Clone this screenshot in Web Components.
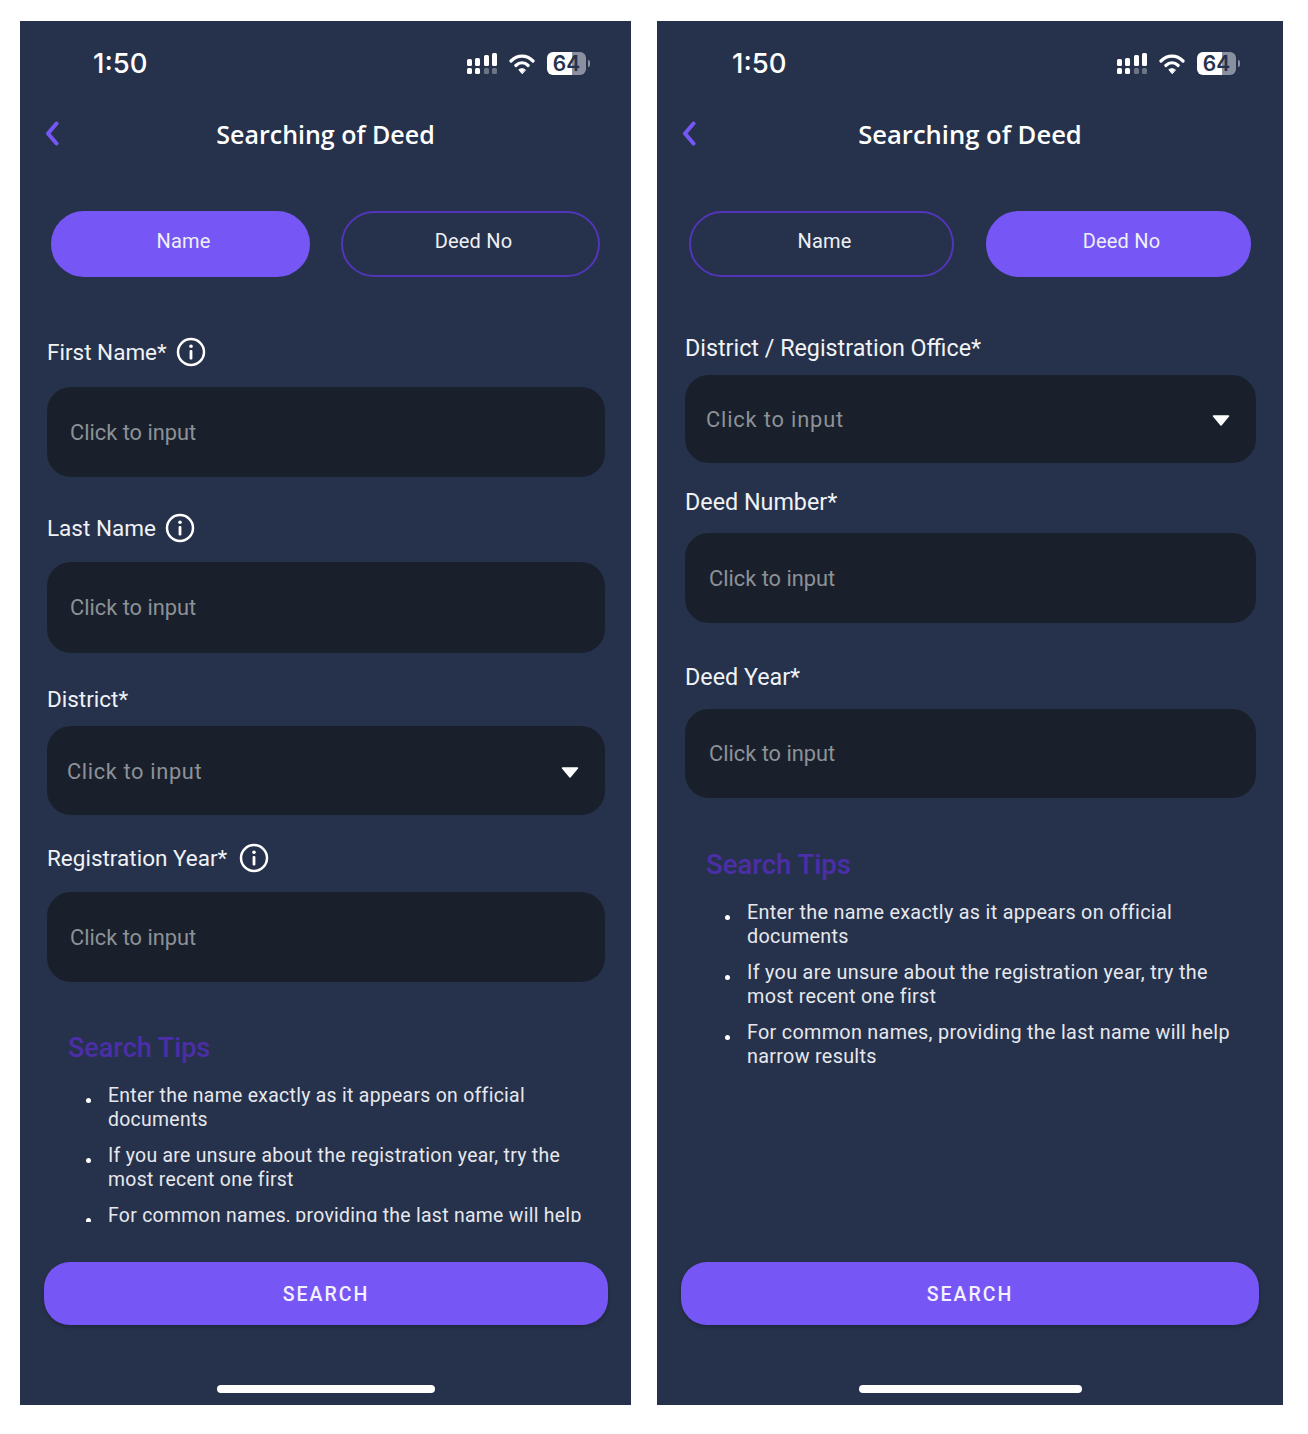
<!DOCTYPE html>
<html>
<head>
<meta charset="utf-8">
<title>Searching of Deed</title>
<style>
    html, body { margin: 0; background: #fff; }
    body {
        display: flex;
        gap: 26px;
        padding: 21px 0 0 20px;
        height: 1413px;
        box-sizing: border-box;
        font-family: Roboto, sans-serif;
    }
</style>
</head>
<body>

<deed-screen style="--w:611px; --pad:27px; --pad-r:26px; --tab-l:31px; --tab-r:31px; --tab-gap:31px; --btn-pad:24px; --btn-pad-r:23px; --bar:218px; --time-x:73px; --icons-r:41px; --back-x:25px; --title-size:25px; --top-gap:60px; --label-size:22.5px; --tip-size:19.4px; --h2-size:27px; --li-x:40px;">
    <form-field label="First Name*" info style="--info-gap:9px; margin-bottom:36px;"></form-field>
    <form-field label="Last Name" info style="--info-gap:9px; --label-gap:19px; --box-h:91px; margin-bottom:31px;"></form-field>
    <form-field label="District*" select style="--box-h:89px; --text-x:20px; --label-gap:12px; --ph-ls:.65px; margin-bottom:28px;"></form-field>
    <form-field label="Registration Year*" info style="--info-gap:12px; --label-gap:19px;"></form-field>
    <search-tips style="--tips-top:50px; --tips-x:21px;"></search-tips>
</deed-screen>

<deed-screen active="1" style="--w:626px; --pad:28px; --pad-r:27px; --tab-l:32px; --tab-r:32px; --tab-gap:32px; --btn-pad:24px; --btn-pad-r:24px; --bar:223px; --time-x:75px; --icons-r:43px; --back-x:25px; --title-size:25.6px; --top-gap:56px; --label-size:23.3px; --tip-size:19.8px; --h2-size:27.5px; --li-x:41px;">
    <form-field label="District / Registration Office*" select style="--box-h:88px; --text-x:21px; --label-gap:12px; --ph-ls:.85px; margin-bottom:24px;"></form-field>
    <form-field label="Deed Number*" style="--text-x:24px; --label-gap:16px; margin-bottom:39px;"></form-field>
    <form-field label="Deed Year*" style="--text-x:24px; --box-h:89px; --label-gap:17px;"></form-field>
    <search-tips style="--tips-top:51px; --tips-x:21px;"></search-tips>
</deed-screen>

<script>
'use strict';

class StatusBar extends HTMLElement {
    connectedCallback() {
        this.attachShadow({ mode: 'open' }).innerHTML = `<style>
    :host { display: flex; align-items: center; justify-content: space-between; height: 84px; padding: 0 var(--icons-r) 0 var(--time-x); }
    .time { font: 500 27.5px Inter, Roboto, sans-serif; color: #fff; }
    .icons { display: flex; align-items: center; gap: 12px; margin-top: 1px; }
    .icons svg:first-child { margin-right: -1px; }
    .battery { display: flex; align-items: center; gap: 2px; }
    .cell {
        width: 39px; height: 23px; border-radius: 6px;
        background: linear-gradient(90deg, #fff 0 65%, #8b90a0 65%);
        color: #26324b; font: 600 21px/23px Inter, Roboto, sans-serif; text-align: center;
    }
    .nub { width: 2px; height: 7px; border-radius: 0 2px 2px 0; background: #8b90a0; }
</style>
<span class="time">1:50</span>
<span class="icons">
    <svg width="31" height="22" viewBox="0 0 31 22">
        <g fill="#fff">
            <rect x="0" y="6" width="5" height="7" rx="1.5"/><rect x="8" y="5" width="5" height="8" rx="1.5"/>
            <rect x="17" y="2" width="5" height="11" rx="1.5"/><rect x="25" y="0" width="5" height="13" rx="1.5"/>
            <rect x="0" y="15" width="5" height="6" rx="1.5"/><rect x="8" y="15" width="5" height="6" rx="1.5"/>
        </g>
        <g fill="#6d7488">
            <rect x="17" y="15" width="5" height="6" rx="1.5"/><rect x="25" y="15" width="5" height="6" rx="1.5"/>
        </g>
    </svg>
    <svg width="26" height="22" viewBox="0 0 26 22" fill="none" stroke="#fff" stroke-width="3.2" stroke-linecap="round">
        <path d="M2 8 C8.5 1.500 17.500 1.500 24 8"/>
        <path d="M6.800 12.500 C10.500 9 15.500 9 19.200 12.500"/>
        <path d="M13 20.500 L9.800 16.700 C11.700 15.300 14.300 15.300 16.200 16.700 Z" fill="#fff" stroke-width="1" stroke-linejoin="round"/>
    </svg>
    <span class="battery"><span class="cell">64</span><span class="nub"></span></span>
</span>`;
    }
}

class AppHeader extends HTMLElement {
    connectedCallback() {
        this.attachShadow({ mode: 'open' }).innerHTML = `<style>
    :host { display: flex; align-items: center; justify-content: center; position: relative; height: 58px; }
    svg { position: absolute; left: var(--back-x); top: 16px; }
    h1 { margin: 0; font: 600 var(--title-size) "Open Sans", sans-serif; color: #fff; }
</style>
<svg width="14" height="25" viewBox="0 0 14 25" fill="none" stroke="#7657f5" stroke-width="4" stroke-linecap="round" stroke-linejoin="round"><path d="M11.500 2.500 L3 12.500 L11.500 22.500"/></svg>
<h1>Searching of Deed</h1>`;
    }
}

class TabSwitch extends HTMLElement {
    connectedCallback() {
        const active = Number(this.getAttribute('active') || 0);
        const tabs = ['Name', 'Deed No'].map((name, i) =>
            `<div class="tab ${i === active ? 'on' : ''}"><span>${name}</span></div>`).join('');
        this.attachShadow({ mode: 'open' }).innerHTML = `<style>
    :host { display: flex; gap: var(--tab-gap); padding: 0 var(--tab-r) 0 var(--tab-l); margin-top: 48px; }
    .tab {
        flex: 1; height: 66px; box-sizing: border-box; border: 2px solid #5235b8; border-radius: 33px;
        display: flex; justify-content: center; padding-top: 16px;
        font: 400 20px/24px Roboto, sans-serif; color: #eef0f5; letter-spacing: .2px;
    }
    .tab.on { background: #7657f5; border-color: #7657f5; }
    .tab span { position: relative; left: 3px; }
</style>${tabs}`;
    }
}

class FormField extends HTMLElement {
    connectedCallback() {
        const isSelect = this.hasAttribute('select');
        const info = this.hasAttribute('info') ? `<svg width="30" height="30" viewBox="0 0 30 30" fill="none">
            <circle cx="15" cy="15" r="13" stroke="#fff" stroke-width="2.500"/>
            <circle cx="15" cy="9.300" r="1.800" fill="#fff"/>
            <rect x="13.600" y="13" width="2.800" height="9.500" rx="1" fill="#fff"/></svg>` : '';
        const arrow = isSelect ? `<svg class="arrow" width="18" height="11" viewBox="0 0 18 11"><path d="M1.500 1 H16.500 L9 10 Z" fill="#fff" stroke="#fff" stroke-width="1.500" stroke-linejoin="round"/></svg>` : '';
        this.attachShadow({ mode: 'open' }).innerHTML = `<style>
    :host { display: block; }
    .label { display: flex; align-items: center; gap: var(--info-gap, 11px); height: 30px; margin-bottom: var(--label-gap, 20px); font: 400 var(--label-size)/30px Roboto, sans-serif; color: #f0f2f6; }
    .box {
        height: var(--box-h, 90px); box-sizing: border-box; border-radius: 24px; background: #19202b;
        display: flex; align-items: center; justify-content: space-between;
        padding: ${isSelect ? 1 : 0}px 26px 0 var(--text-x, 23px);
        font: 400 21.8px Roboto, sans-serif; color: #8d9198; letter-spacing: var(--ph-ls, 0);
    }
    .arrow { margin-top: 2px; }
</style>
<div class="label"><span>${this.getAttribute('label')}</span>${info}</div>
<div class="box"><span>Click to input</span>${arrow}</div>`;
    }
}

class SearchTips extends HTMLElement {
    connectedCallback() {
        this.attachShadow({ mode: 'open' }).innerHTML = `<style>
    :host { display: block; padding: var(--tips-top) 0 0 var(--tips-x); }
    h2 { margin: 0 0 20px; font: 500 var(--h2-size)/32px Roboto, sans-serif; color: #4c2ea8; }
    ul { margin: 0; padding: 0 0 0 var(--li-x); list-style: none; }
    li { position: relative; font: 400 var(--tip-size)/24px Roboto, sans-serif; color: #e6e8ee; letter-spacing: .3px; margin-bottom: 12px; }
    li::before { content: ""; position: absolute; left: -22px; top: 14px; width: 5px; height: 5px; border-radius: 50%; background: #fff; }
</style>
<h2>Search Tips</h2>
<ul>
    <li>Enter the name exactly as it appears on official documents</li>
    <li>If you are unsure about the registration year, try the most recent one first</li>
    <li>For common names, providing the last name will help narrow results</li>
</ul>`;
    }
}

class DeedScreen extends HTMLElement {
    connectedCallback() {
        this.attachShadow({ mode: 'open' }).innerHTML = `<style>
    :host { display: flex; flex-direction: column; width: var(--w); height: 1384px; background: #26324b; }
    .scroll { flex: 1; min-height: 0; overflow: hidden; padding: var(--top-gap) var(--pad-r) 0 var(--pad); }
    .foot { flex: none; height: 183px; box-sizing: border-box; padding: 40px var(--btn-pad-r) 0 var(--btn-pad); display: flex; flex-direction: column; align-items: center; }
    .search {
        align-self: stretch; height: 63px; box-sizing: border-box; padding-top: 1px; border-radius: 26px; background: #7657f5;
        box-shadow: 0 2px 4px rgba(0,0,0,.2);
        display: flex; align-items: center; justify-content: center;
        font: 500 19.5px Roboto, sans-serif; color: #f3f1ff; letter-spacing: 2px;
    }
    .home { width: var(--bar); height: 8px; border-radius: 4px; background: #fff; margin-top: 60px; }
</style>
<status-bar></status-bar>
<app-header></app-header>
<tab-switch active="${this.getAttribute('active') || 0}"></tab-switch>
<div class="scroll"><slot></slot></div>
<div class="foot"><div class="search">SEARCH</div><div class="home"></div></div>`;
    }
}

window.customElements.define('status-bar', StatusBar);
window.customElements.define('app-header', AppHeader);
window.customElements.define('tab-switch', TabSwitch);
window.customElements.define('form-field', FormField);
window.customElements.define('search-tips', SearchTips);
window.customElements.define('deed-screen', DeedScreen);
</script>
</body>
</html>
